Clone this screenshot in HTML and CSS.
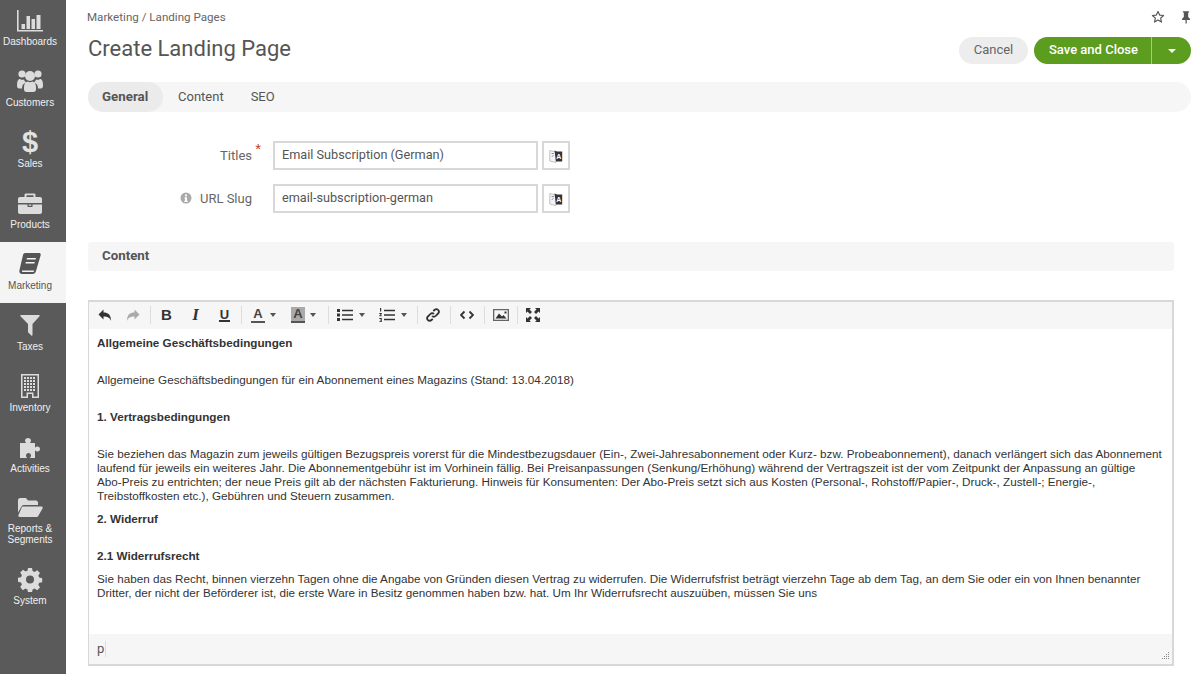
FILE: index.html
```html
<!DOCTYPE html>
<html lang="en">
<head>
<meta charset="utf-8">
<title>Create Landing Page</title>
<link rel="stylesheet" href="styles.css">
</head>
<body>
<div class="app">
  <nav class="sidebar">
    <a class="nav-item nav-first"><svg class="nav-icon" viewBox="0 0 26 26"><path d="M0 3h1.600v20H26v1.600H0z"/><path d="M4.500 17h3.500v5H4.500zM9.500 9h3.500v13H9.500zM14.500 12h3.500v10h-3.500zM19.500 8h4v14h-4z"/></svg><span>Dashboards</span></a>
    <a class="nav-item"><svg class="nav-icon" viewBox="0 0 26 26"><circle cx="5" cy="6" r="3.600"/><circle cx="21" cy="6" r="3.600"/><circle cx="13" cy="8" r="5"/><path d="M0 18c0-5 1-7 3-7 1.500 1 3 1 4 .5.500 1.500 1 2 2 3-3 1-4 3-4 6H2c-1 0-2-1-2-2.500zM26 18c0-5-1-7-3-7-1.500 1-3 1-4 .5-.500 1.500-1 2-2 3 3 1 4 3 4 6h3c1 0 2-1 2-2.500zM7 19c0-3 1.500-5 3.500-5.500 1.500 1 3.500 1 5 0C17.500 14 19 16 19 19v2.500c0 1.500-1 2.500-2.500 2.500h-7C8 24 7 23 7 21.500z"/></svg><span>Customers</span></a>
    <a class="nav-item"><span class="nav-icon nav-dollar">$</span><span>Sales</span></a>
    <a class="nav-item"><svg class="nav-icon" viewBox="0 0 26 26"><path d="M9 3.500h8c1 0 1.500.5 1.500 1.500v2H23c1.200 0 2 .8 2 2v4H1V9c0-1.200.8-2 2-2h4.500V5c0-1 .5-1.500 1.500-1.500zm.5 1.700V7h7V5.200zM1 14.500h9.500v2.500h5v-2.500H25V22c0 1.200-.8 2-2 2H3c-1.200 0-2-.8-2-2zM11.700 14.500h2.600v1.300h-2.600z"/></svg><span>Products</span></a>
    <a class="nav-item nav-active"><svg class="nav-icon" viewBox="0 0 26 26"><path d="M8 2h14c1.500 0 2 1 1.600 2.500L19 20c-.5 2-1.500 3-3.500 3H5C3 23 2 21.500 2.400 19.500L6 4c.2-1 1-2 2-2zm2 5-.4 1.600h9L19 7zm-1.200 4-.4 1.600h9l.4-1.600zM5 19.500c-.3 1 .2 1.600 1 1.600h9.500c1 0 1.500-.6 1.800-1.600z" fill-rule="evenodd"/></svg><span>Marketing</span></a>
    <a class="nav-item"><svg class="nav-icon" viewBox="0 0 26 26"><path d="M4 3h18c.8 0 1 .8.500 1.300L15.500 12v11c0 .8-.7 1-1.200.6l-3-3c-.2-.2-.3-.4-.3-.7V12L3.500 4.300C3 3.800 3.200 3 4 3z"/></svg><span>Taxes</span></a>
    <a class="nav-item"><svg class="nav-icon" viewBox="0 0 26 26"><path fill-rule="evenodd" d="M4 1h18v24h-7v-4h-4v4H4zm1.500 1.500v21H9.500v-4h7v4h4v-21z"/><path d="M7 4h2v2H7zm3 0h2v2h-2zm3 0h2v2h-2zm3 0h2v2h-2zM7 7h2v2H7zm3 0h2v2h-2zm3 0h2v2h-2zm3 0h2v2h-2zM7 10h2v2H7zm3 0h2v2h-2zm3 0h2v2h-2zm3 0h2v2h-2zM7 13h2v2H7zm3 0h2v2h-2zm3 0h2v2h-2zm3 0h2v2h-2zM7 16h2v2H7zm3 0h2v2h-2zm3 0h2v2h-2zm3 0h2v2h-2z"/></svg><span>Inventory</span></a>
    <a class="nav-item"><svg class="nav-icon" viewBox="0 0 26 26"><path d="M3 9h6c-.5-1-1-1.500-1-2.500C8 5 9.500 4 11 4s3 1 3 2.500c0 1-.5 1.500-1 2.500h5v4.500c1-.5 1.500-1 2.500-1 1.500 0 2.500 1 2.500 2.500s-1 2.500-2.500 2.500c-1 0-1.500-.5-2.500-1V24h-5c.5-1 1-1.500 1-2.500 0-1.500-1-2.500-2.500-2.500S9 20 9 21.500c0 1 .5 1.500 1 2.500H3z"/></svg><span>Activities</span></a>
    <a class="nav-item nav-reports"><svg class="nav-icon" viewBox="0 0 26 26"><path d="M1 6c0-1 1-2 2-2h6l2 2.500h8c1 0 2 1 2 2V11H7c-1 0-2 .5-2.500 1.500L1 18.500z"/><path d="M6 12.500h18.500c1 0 1.500 1 1 2l-4 7c-.5 1-1 1.500-2.500 1.500H2.500c-1 0-1.500-1-1-2l3-7c.3-1 .8-1.500 1.500-1.500z"/></svg><span>Reports &amp;<br>Segments</span></a>
    <a class="nav-item"><svg class="nav-icon" viewBox="0 0 26 26"><path fill-rule="evenodd" d="M11 2h4l.6 3 2 .9 2.600-1.700 2.800 2.800-1.700 2.600.9 2 3 .6v4l-3 .6-.9 2 1.700 2.600-2.800 2.800-2.600-1.700-2 .9-.6 3h-4l-.6-3-2-.9-2.600 1.700L3.200 21l1.700-2.600-.9-2-3-.6v-4l3-.6.9-2-1.700-2.600L6 3.800l2.600 1.700 2-.9zM13 9.500a4 4 0 1 0 0 8 4 4 0 0 0 0-8z"/></svg><span>System</span></a>
  </nav>

  <main class="main">
    <div class="topbar">
      <div class="breadcrumb">Marketing / Landing Pages</div>
      <div class="top-actions">
        <svg class="top-icon" viewBox="0 0 16 16"><path d="M8 1.600l1.900 4.200 4.500.5-3.400 3 1 4.500L8 11.500l-4 2.300 1-4.500-3.400-3 4.500-.5z" fill="none" stroke="#555" stroke-width="1.300" stroke-linejoin="round"/></svg>
        <svg class="top-icon" viewBox="0 0 16 16"><path d="M4.500 1.500h7v1.400h-1V8l2 2v1.300H8.800V15.500h-1.400v-4.200H3.500V10l2-2V2.900h-1z" fill="#555"/></svg>
      </div>
    </div>

    <header class="title-row">
      <h1 class="title">Create Landing Page</h1>
      <div class="actions">
        <button class="btn-cancel">Cancel</button>
        <div class="btn-group">
          <button class="btn-save">Save and Close</button>
          <button class="btn-caret"><i class="caret caret-white"></i></button>
        </div>
      </div>
    </header>

    <div class="tabs">
      <div class="tab tab-active">General</div>
      <div class="tab">Content</div>
      <div class="tab">SEO</div>
    </div>

    <form class="form">
      <div class="row">
        <label class="label">Titles<sup class="req">*</sup></label>
        <div class="input">Email Subscription (German)</div>
        <button type="button" class="lang-btn"><svg class="lang-icon" viewBox="0 0 14 14"><path d="M.8 1.500l6 1.500v10.500l-6-1.500z" fill="#f4f4f4" stroke="#aaa" stroke-width=".7"/><path d="M2.500 4.500h2.500M3.700 4v1M2.700 8l2-2" stroke="#777" stroke-width=".7" fill="none"/><path d="M5.500 1.500l2.500 1h5.200v10H7z" fill="#333"/><text x="9.800" y="10.300" class="lang-a">A</text></svg></button>
      </div>
      <div class="row">
        <label class="label"><svg class="info" viewBox="0 0 12 12"><circle cx="6" cy="6" r="5.500" fill="#aaa"/><path d="M5 2.500h2V4.300H5zM4.500 5.200h2.500v3.600h.7V10H4.300V8.800H5V6.400h-.5z" fill="#fff"/></svg>URL Slug</label>
        <div class="input">email-subscription-german</div>
        <button type="button" class="lang-btn"><svg class="lang-icon" viewBox="0 0 14 14"><path d="M.8 1.500l6 1.500v10.500l-6-1.500z" fill="#f4f4f4" stroke="#aaa" stroke-width=".7"/><path d="M2.500 4.500h2.500M3.700 4v1M2.700 8l2-2" stroke="#777" stroke-width=".7" fill="none"/><path d="M5.500 1.500l2.500 1h5.200v10H7z" fill="#333"/><text x="9.800" y="10.300" class="lang-a">A</text></svg></button>
      </div>
    </form>

    <div class="section">Content</div>

    <div class="editor">
      <div class="toolbar">
        <span class="tool"><svg viewBox="0 0 14 14" class="ti"><path d="M5.500 1.500v3c4.500 0 7.500 2 7.500 8.500-1.300-3.500-3.500-4.500-7.500-4.500v3L.5 6.500z"/></svg></span>
        <span class="tool tool-off"><svg viewBox="0 0 14 14" class="ti"><path d="M8.500 1.500v3C4 4.500 1 6.500 1 13c1.300-3.500 3.500-4.500 7.500-4.500v3l5-5z"/></svg></span>
        <i class="sep"></i>
        <span class="tool tool-b"><b class="glyph">B</b></span>
        <span class="tool tool-b"><b class="glyph glyph-i">I</b></span>
        <span class="tool tool-b"><span class="glyph-u">U</span></span>
        <i class="sep sep-a"></i>
        <span class="tool tool-drop"><span class="glyph-a">A</span><i class="caret"></i></span>
        <span class="tool tool-drop"><span class="glyph-a glyph-a-bg">A</span><i class="caret"></i></span>
        <i class="sep sep-b"></i>
        <span class="tool tool-drop tool-list"><svg viewBox="0 0 16 14" class="ti ti-list"><path d="M0 1h3v3H0zM0 5.500h3v3H0zM0 10h3v3H0zM5 1.700h11v1.600H5zM5 6.200h11v1.600H5zM5 10.700h11v1.600H5z"/></svg><i class="caret"></i></span>
        <span class="tool tool-drop tool-list"><svg viewBox="0 0 16 14" class="ti ti-list"><path d="M1 0h1.200v3.500H1zM.3 5h2.500v1L1.500 7.500h1.400v.8H.3v-.8L1.700 6H.3zM.3 10h2.500v4H.3v-.8h1.600v-.8H1v-.7h.9v-.8H.3zM5 1.700h11v1.600H5zM5 6.200h11v1.600H5zM5 10.700h11v1.600H5z"/></svg><i class="caret"></i></span>
        <i class="sep sep-c"></i>
        <span class="tool"><svg viewBox="0 0 14 14" class="ti ti-line"><path d="M6 8a2.500 2.500 0 0 0 3.600 0l2.500-2.500A2.500 2.500 0 0 0 8.500 2L7.300 3.200"/><path d="M8 6a2.500 2.500 0 0 0-3.600 0L1.900 8.500A2.500 2.500 0 0 0 5.500 12l1.200-1.200"/></svg></span>
        <i class="sep sep-d"></i>
        <span class="tool"><svg viewBox="0 0 14 14" class="ti ti-line"><path d="M4.500 3.500 1 7l3.500 3.500M9.500 3.500 13 7l-3.500 3.500"/></svg></span>
        <i class="sep sep-d"></i>
        <span class="tool"><svg viewBox="0 0 16 14" class="ti ti-img"><path fill-rule="evenodd" d="M0 1h16v12H0zm1.300 1.300v9.400h13.400V2.300z" fill="#666"/><path d="M2.500 10.500 6 5.500l3 3 1.500-1.500 3 3.500z M11.500 3.500h2v2h-2z"/></svg></span>
        <i class="sep sep-c"></i>
        <span class="tool"><svg viewBox="0 0 14 14" class="ti"><path d="M0 0h5L3.500 1.500 6 4 4 6 1.500 3.500 0 5zM14 0v5l-1.500-1.500L10 6 8 4l2.500-2.500L9 0zM0 14V9l1.500 1.500L4 8l2 2-2.500 2.500L5 14zM14 14H9l1.500-1.500L8 10l2-2 2.500 2.500L14 9z"/></svg></span>
      </div>
      <div class="doc">
        <p class="doc-h">Allgemeine Geschäftsbedingungen</p>
        <p class="doc-lead">Allgemeine Geschäftsbedingungen für ein Abonnement eines Magazins (Stand: 13.04.2018)</p>
        <p class="doc-h">1. Vertragsbedingungen</p>
        <p>Sie beziehen das Magazin zum jeweils gültigen Bezugspreis vorerst für die Mindestbezugsdauer (Ein-, Zwei-Jahresabonnement oder Kurz- bzw. Probeabonnement), danach verlängert sich das Abonnement laufend für jeweils ein weiteres Jahr. Die Abonnementgebühr ist im Vorhinein fällig. Bei Preisanpassungen (Senkung/Erhöhung) während der Vertragszeit ist der vom Zeitpunkt der Anpassung an gültige <span class="nowrap">Abo-Preis</span> zu entrichten; der neue Preis gilt ab der nächsten Fakturierung. Hinweis für Konsumenten: Der Abo-Preis setzt sich aus Kosten (Personal-, Rohstoff/Papier-, Druck-, Zustell-; Energie-, <span class="nowrap">Treibstoffkosten etc.),</span> Gebühren und Steuern zusammen.</p>
        <p class="doc-h">2. Widerruf</p>
        <p class="doc-h doc-h-tight">2.1 Widerrufsrecht</p>
        <p>Sie haben das Recht, binnen vierzehn Tagen ohne die Angabe von Gründen diesen Vertrag zu widerrufen. Die Widerrufsfrist beträgt vierzehn Tage ab dem Tag, an dem Sie oder ein von Ihnen benannter Dritter, der nicht der Beförderer ist, die erste Ware in Besitz genommen haben bzw. hat. Um Ihr Widerrufsrecht auszuüben, müssen Sie uns</p>
      </div>
      <div class="statusbar">
        <span class="path">p</span>
        <svg class="grip" viewBox="0 0 10 10"><path d="M8 1h1v1H8zM6 3h1v1H6zM8 3h1v1H8zM4 5h1v1H4zM6 5h1v1H6zM8 5h1v1H8zM2 7h1v1H2zM4 7h1v1H4zM6 7h1v1H6zM8 7h1v1H8z"/></svg>
      </div>
    </div>
  </main>
</div>
</body>
</html>
```
FILE: styles.css
```css
* { box-sizing: border-box; }
html, body { margin: 0; height: 100%; overflow: hidden; }
body { font-family: Roboto, "Liberation Sans", sans-serif; color: #555; background: #fff; }
.app { display: flex; height: 674px; }

.sidebar { width: 66px; flex: none; background: #5a5a5a; display: flex; flex-direction: column; }
.nav-item { display: flex; flex-direction: column; align-items: center; padding: 9px 6px 12px 0; color: #f0f0f0; font: 10px/11px "Liberation Sans", sans-serif; text-align: center; }
.nav-first { padding-top: 7px; }
.nav-reports { padding-top: 8px; }
.nav-icon { width: 26px; height: 26px; margin-bottom: 3px; fill: #dcdcdc; display: block; }
.nav-dollar { font: bold 29px/26px "Liberation Sans", sans-serif; color: #e2e2e2; text-align: center; }
.nav-active { background: #f4f4f4; color: #555; }
.nav-active .nav-icon { fill: #555; }

.main { flex: 1; min-width: 0; padding: 0 3px 0 22px; }
.topbar { height: 33px; display: flex; justify-content: space-between; align-items: center; }
.breadcrumb { font-size: 11.600px; color: #666; margin-left: -1px; }
.top-actions { display: flex; gap: 14px; margin-right: -2px; }
.top-icon { width: 14px; height: 14px; display: block; }

.title-row { margin-top: 4px; height: 27px; display: flex; justify-content: space-between; align-items: center; }
.title { margin: 0 0 4px; font-size: 22px; font-weight: 400; color: #555; }
.actions { display: flex; gap: 6px; }
.btn-cancel { width: 69px; height: 27px; border: 0; border-radius: 14px; background: #ededed; color: #666; font: 13px Roboto, sans-serif; padding: 0 0 2px; }
.btn-group { display: flex; height: 27px; }
.btn-save { width: 118px; height: 27px; border: 0; border-radius: 14px 0 0 14px; background: #5c9c1f; color: #fff; font: 500 13px Roboto, sans-serif; padding: 0 0 2px 2px; border-right: 1px solid #a8c98a; }
.btn-caret { width: 39px; height: 27px; border: 0; border-radius: 0 14px 14px 0; background: #5c9c1f; padding: 0; display: flex; align-items: center; justify-content: center; }
.caret { display: inline-block; width: 0; height: 0; border-left: 3.500px solid transparent; border-right: 3.500px solid transparent; border-top: 4px solid #555; }
.caret-white { border-top-color: #fff; border-left-width: 4px; border-right-width: 4px; }

.tabs { margin-top: 18px; height: 30px; border-radius: 15px; background: #f6f6f6; display: flex; align-items: center; font-size: 13px; }
.tab { height: 30px; line-height: 29px; padding: 0 12px 0 15px; color: #555; }
.tab-active { width: 75px; background: #ebebeb; border-radius: 15px; font-size: 13.300px; font-weight: 700; padding: 0 0 0 14px; }

.form { margin-top: 29px; display: flex; flex-direction: column; gap: 14px; }
.row { display: flex; align-items: center; height: 29px; }
.label { width: 185px; padding-right: 21px; padding-bottom: 1px; text-align: right; font-size: 13px; color: #666; position: relative; display: flex; justify-content: flex-end; align-items: center; }
.req { color: #c0392b; font-size: 15px; font-family: "Liberation Sans", sans-serif; line-height: 1; position: absolute; right: 12px; top: -7px; }
.info { width: 12px; height: 12px; margin-right: 8px; }
.input { width: 265px; height: 29px; border: 2px solid #d8d8d8; padding: 0 7px; line-height: 24px; font-size: 12.700px; color: #555; }
.lang-btn { width: 28px; height: 29px; margin-left: 4px; border: 2px solid #d8d8d8; background: #fff; padding: 0; display: flex; align-items: center; justify-content: center; }
.lang-icon { width: 14px; height: 14px; }
.lang-a { font: bold 7px "Liberation Sans", sans-serif; fill: #fff; text-anchor: middle; }

.section { margin-top: 29px; margin-right: 17px; height: 29px; line-height: 28px; background: #f6f6f6; border-radius: 3px; padding-left: 14px; font-size: 13.300px; font-weight: 700; color: #555; }

.editor { margin-top: 29px; margin-right: 17px; height: 366px; border: 2px solid #d8d8d8; border-left-width: 1px; display: flex; flex-direction: column; }
.toolbar { height: 27px; flex: none; background: #f6f6f6; display: flex; align-items: center; padding: 0 0 2px 2px; }
.tool { width: 28px; height: 25px; flex: none; display: flex; align-items: center; justify-content: center; color: #333; fill: #333; }
.tool-b { width: 29px; }
.tool-off { fill: #aaa; }
.tool-drop { width: 40px; justify-content: flex-start; padding-left: 7px; gap: 5px; }
.tool-list { width: 42px; padding-left: 6px; gap: 6px; }
.sep { width: 1px; height: 18px; background: #ddd; margin: 0 1px 0 3px; flex: none; }
.sep-a { margin: 0 2px; }
.sep-b { margin: 0 2px 0 4px; }
.sep-c { margin: 0 1px 0 2px; }
.sep-d { margin: 0 2px 0 3px; }
.ti { width: 14px; height: 14px; display: block; }
.ti-list { width: 16px; }
.ti-img { width: 16px; }
.ti-line { fill: none; stroke: #333; stroke-width: 1.800; }
.glyph { font: bold 15px/1 "Liberation Sans", sans-serif; color: #333; }
.glyph-i { font: italic bold 17px/1 "Liberation Serif", serif; }
.glyph-u { font: 700 13px/13px "Liberation Sans", sans-serif; border-bottom: 2px solid #333; width: 11px; text-align: center; height: 14px; color: #333; }
.glyph-a { font: 700 13px/14px "Liberation Sans", sans-serif; width: 14px; text-align: center; border-bottom: 2px solid #555; color: #444; }
.glyph-a-bg { background: #aaa; }

.doc { flex: 1; min-height: 0; padding: 7px 6px 0 8px; font: 11.700px/14px "Liberation Sans", sans-serif; color: #333; overflow: hidden; }
.doc p { margin: 0 0 9px; }
.doc .doc-h { font-weight: 700; margin-bottom: 23px; }
.doc .doc-lead { margin-bottom: 23px; }
.doc .doc-h-tight { margin-bottom: 9px; }
.nowrap { white-space: nowrap; }
.statusbar { height: 30px; flex: none; background: #f6f6f6; display: flex; align-items: center; justify-content: space-between; padding: 0 2px 0 8px; font-size: 13px; }
.path { border-right: 1px solid #ddd; padding-right: 1px; color: #555; line-height: 16px; }
.grip { width: 10px; height: 10px; fill: #888; align-self: flex-end; margin-bottom: 3px; }
```
